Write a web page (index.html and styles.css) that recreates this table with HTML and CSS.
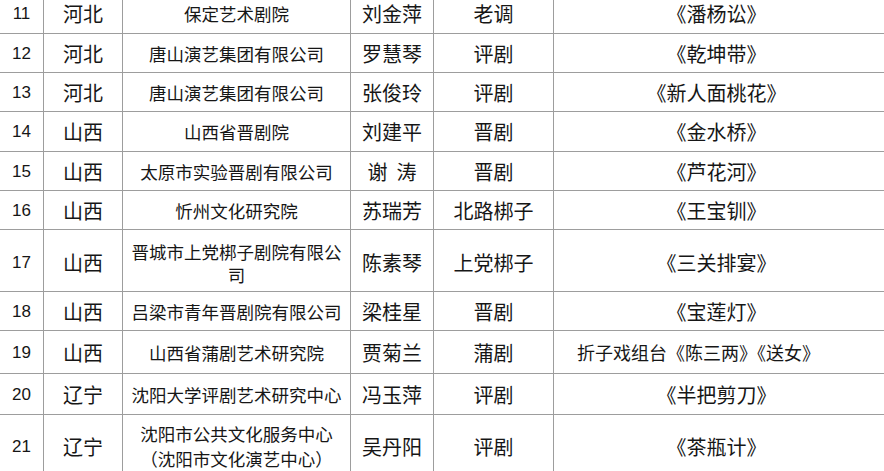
FILE: index.html
```html
<!DOCTYPE html>
<html lang="zh-CN">
<head>
<meta charset="utf-8">
<title>名单</title>
<link rel="stylesheet" href="styles.css">
</head>
<body>
<div class="sheet">
<table class="grid">
  <colgroup>
    <col class="c-no"><col class="c-prov"><col class="c-unit"><col class="c-name"><col class="c-genre"><col class="c-play">
  </colgroup>
  <tbody>
    <tr class="r-first"><td class="no">11</td><td class="big">河北</td><td class="unit">保定艺术剧院</td><td class="big">刘金萍</td><td class="big">老调</td><td class="play">《潘杨讼》</td></tr>
    <tr><td class="no">12</td><td class="big">河北</td><td class="unit">唐山演艺集团有限公司</td><td class="big">罗慧琴</td><td class="big">评剧</td><td class="play">《乾坤带》</td></tr>
    <tr><td class="no">13</td><td class="big">河北</td><td class="unit">唐山演艺集团有限公司</td><td class="big">张俊玲</td><td class="big">评剧</td><td class="play">《新人面桃花》</td></tr>
    <tr class="r-40"><td class="no">14</td><td class="big">山西</td><td class="unit">山西省晋剧院</td><td class="big">刘建平</td><td class="big">晋剧</td><td class="play">《金水桥》</td></tr>
    <tr><td class="no">15</td><td class="big">山西</td><td class="unit">太原市实验晋剧有限公司</td><td class="big">谢&nbsp;&nbsp;涛</td><td class="big">晋剧</td><td class="play">《芦花河》</td></tr>
    <tr><td class="no">16</td><td class="big">山西</td><td class="unit">忻州文化研究院</td><td class="big">苏瑞芳</td><td class="big">北路梆子</td><td class="play">《王宝钏》</td></tr>
    <tr class="r-two"><td class="no">17</td><td class="big">山西</td><td class="unit">晋城市上党梆子剧院有限公司</td><td class="big">陈素琴</td><td class="big">上党梆子</td><td class="play">《三关排宴》</td></tr>
    <tr><td class="no">18</td><td class="big">山西</td><td class="unit">吕梁市青年晋剧院有限公司</td><td class="big">梁桂星</td><td class="big">晋剧</td><td class="play">《宝莲灯》</td></tr>
    <tr class="r-43"><td class="no">19</td><td class="big">山西</td><td class="unit">山西省蒲剧艺术研究院</td><td class="big">贾菊兰</td><td class="big">蒲剧</td><td class="play long">折子戏组台《陈三两》《送女》</td></tr>
    <tr class="r-41"><td class="no">20</td><td class="big">辽宁</td><td class="unit">沈阳大学评剧艺术研究中心</td><td class="big">冯玉萍</td><td class="big">评剧</td><td class="play">《半把剪刀》</td></tr>
    <tr class="r-last"><td class="no">21</td><td class="big">辽宁</td><td class="unit">沈阳市公共文化服务中心<br>（沈阳市文化演艺中心）</td><td class="big">吴丹阳</td><td class="big">评剧</td><td class="play">《茶瓶计》</td></tr>
  </tbody>
</table>
</div>
</body>
</html>
```

FILE: styles.css
```css
html, body {
  margin: 0;
  padding: 0;
  background: #ffffff;
  overflow: hidden;
}

.sheet {
  width: 884px;
  height: 471px;
  overflow: hidden;
}

.grid {
  border-collapse: collapse;
  table-layout: fixed;
  width: 896px;
  margin-top: -7px;
  margin-left: -1px;
  color: #161616;
  font-family: "Noto Sans CJK SC", "Noto Sans", sans-serif;
}

.c-no { width: 44px; }
.c-prov { width: 79px; }
.c-unit { width: 228px; }
.c-name { width: 83px; }
.c-genre { width: 120px; }
.c-play { width: 342px; }

.grid td {
  border: 1px solid #9d9d9d;
  text-align: center;
  vertical-align: middle;
  padding: 0;
  height: 38px;
  line-height: 23px;
  white-space: nowrap;
}

.grid td.no {
  font-family: "Liberation Sans", Arial, sans-serif;
  font-size: 17px;
}

.grid td.big {
  font-size: 20px;
}

.grid td.unit {
  font-size: 17.5px;
  white-space: normal;
  padding: 0 4px;
}

.grid td.play {
  font-size: 20px;
  text-align: center;
  padding-right: 16px;
}

.grid td.play.long {
  font-size: 18px;
  padding-right: 52px;
}

.r-first td { height: 39px; }
.r-40 td { height: 39px; }
.r-two td { height: 58px; padding-top: 3px; }
.r-two td.unit { padding-top: 5px; height: 56px; }
.r-43 td { height: 42px; }
.r-41 td { height: 40px; }
.r-last td { height: 62px; padding-top: 0; line-height: 25px; }
```
